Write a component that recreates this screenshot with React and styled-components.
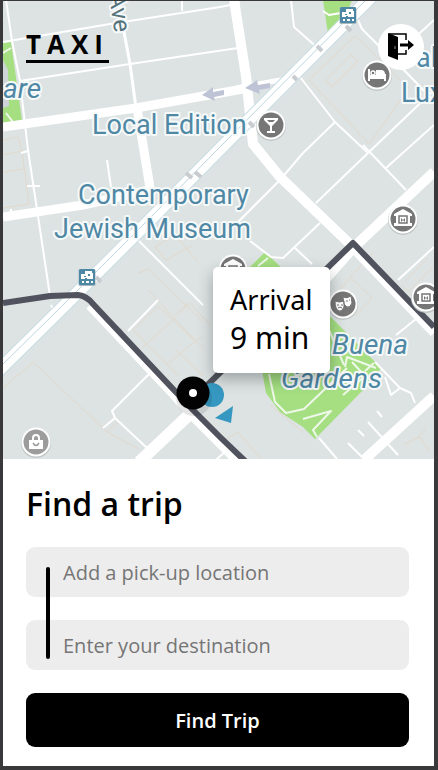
import React from "react";
import styled, { createGlobalStyle } from "styled-components";

const GlobalStyle = createGlobalStyle`
  *, *::before, *::after { box-sizing: border-box; }
  body { margin: 0; background: #39393b; }
`;

const Screen = styled.main`
  display: flex;
  flex-direction: column;
  min-height: 100vh;
  border: solid #39393b;
  border-width: 1px 4px 4px 3px;
  background: #fff;
  color: #000;
  font-family: "Open Sans", "Noto Sans", sans-serif;
`;

const MapArea = styled.section`
  position: relative;
  display: flex;
  flex: 1;
  min-height: 400px;
  overflow: hidden;
  background: #dde3e3;
`;

const MapCanvas = styled.svg`
  position: absolute;
  inset: 0;
  width: 100%;
  height: 100%;
`;

const Header = styled.header`
  position: relative;
  display: flex;
  flex: 1;
  align-items: flex-start;
  justify-content: space-between;
  padding: 23px 10px 0 23px;
`;

const Logo = styled.h1`
  margin: 5px 0 0;
  padding-bottom: 1px;
  border-bottom: 3px solid #000;
  font-family: "Open Sans", sans-serif;
  font-size: 26px;
  line-height: 30px;
  font-weight: 700;
  letter-spacing: 6px;
`;

const LogoutButton = styled.button`
  display: grid;
  place-items: center;
  width: 46px;
  height: 46px;
  padding: 0;
  border: 0;
  border-radius: 50%;
  background: #fff;
  cursor: pointer;
`;

const ArrivalCard = styled.div`
  position: absolute;
  left: 210px;
  top: 266px;
  width: 117px;
  padding: 15px 0 16px 17px;
  border-radius: 5px;
  background: #fff;
  box-shadow: 0 6px 16px rgba(0, 0, 0, 0.3);
  font-family: "Noto Sans", sans-serif;
  white-space: nowrap;
`;

const ArrivalLabel = styled.div`
  font-size: 27px;
  line-height: 36px;
`;

const ArrivalTime = styled.div`
  font-size: 30px;
  line-height: 39px;
`;

const TripForm = styled.form`
  display: flex;
  flex-direction: column;
  gap: 23px;
  padding: 25px 25px 19px 23px;
`;

const Title = styled.h2`
  margin: 0;
  font-size: 32px;
  line-height: 40px;
  font-weight: 600;
`;

const Fields = styled.div`
  position: relative;
  display: flex;
  flex-direction: column;
  gap: 23px;

  &::before {
    content: "";
    position: absolute;
    left: 20px;
    top: 20px;
    bottom: 11px;
    width: 4px;
    border-radius: 2px;
    background: #000;
  }
`;

const Field = styled.input`
  width: 100%;
  height: 50px;
  padding: 0 16px 0 37px;
  border: 0;
  border-radius: 9px;
  background: #ededed;
  color: #000;
  font: inherit;
  font-size: 20px;

  &::placeholder { color: #757575; opacity: 1; }
`;

const SubmitButton = styled.button`
  height: 54px;
  padding: 0 16px;
  border: 0;
  border-radius: 9px;
  background: #000;
  color: #fff;
  font: inherit;
  font-size: 20px;
  font-weight: 600;
  cursor: pointer;
`;

const MapLabel = styled.text`
  fill: #4f88a5;
  stroke: #f6f9f9;
  stroke-width: 4px;
  stroke-linejoin: round;
  paint-order: stroke;
  font-family: Roboto, "Liberation Sans", sans-serif;
  font-size: ${(p) => (p.$italic ? "28px" : "27px")};
  font-style: ${(p) => (p.$italic ? "italic" : "normal")};
`;

const StreetLabel = styled(MapLabel)`
  fill: #56737c;
  font-size: 24px;
`;

const Lines = ({ paths, width, color = "#fff" }) => (
  <g fill="none" stroke={color} strokeWidth={width} strokeLinejoin="round">
    {paths.map((d) => <path key={d} d={d} />)}
  </g>
);

const thinRoads = [
  "M6 0 12 41 20 81 28 150 38 216 50 296",
  "M3 42 110 24 220 7 240 3",
  "M182 0V11",
  "M20 81 130 64 238 48",
  "M21 153 28 151M27 186H40M11 215V209",
  "M107 160 111 187",
  "M291 0 294 27 320 50",
  "M323 11 329 15 341 13",
  "M358 20 362 29 381 48 401 67 434 101",
  "M434 20 410 42",
  "M300 77 335 122 368 153",
  "M335 122 303 153 280 180 238 222",
  "M434 90 368 153 316 203",
  "M363 145 406 190",
  "M434 125 386 168",
  "M320 223 283 258 271 257 250 241",
  "M295 248 312 264",
  "M434 247 398 280",
  "M138 240 203 305",
  "M158 300 128 331",
  "M152 371 112 411 115 418 147 448M115 418 103 428",
  "M51 305 55 314",
  "M385 377 391 395 400 388 411 393 415 403",
  "M375 362 400 388M396 335 421 315",
  "M319 438 337 459",
  "M368 422 398 455M348 443 363 458M377 411 382 417M358 430 364 436",
  "M216 460 228 449",
];

const buildings = [
  "M3 140 18 137 22 151 3 155M22 151 29 204 3 208M3 172 24 169",
  "M3 388 33 362 107 432 139 449M107 432 120 420",
  "M138 273 148 269 202 321M148 290 195 340M133 330 178 376M133 330 158 306M142 348 175 318M158 306 203 348M166 365 203 335M180 313 190 303 210 325M176 350 203 376M187 304 175 315",
  "M155 247 175 235 198 262M155 247 166 260 192 246",
  "M309 80 355 36 409 88 369 144 309 80M326 80 351 55 358 61 332 87Z",
  "M405 281 428 258M409 291 434 266M401 285 416 298",
  "M335 297 350 277 372 298 355 316M350 277 373 253",
  "M220 443 238 432 260 458M270 405 304 433",
  "M404 444 420 437 430 452M417 439 426 428",
];

const streetTicks = "M107 326 113 331M116 327 122 332M186 173 192 178M195 172 201 177M346 26 351 31M317 46 322 51M293 76 297 80M249 122 254 127M96 277 101 282";

function Poi({ x, y, color = "#767676", children }) {
  return (
    <g transform={`translate(${x} ${y})`}>
      <circle cy="1" r="15" fill="#bfc5c5" />
      <circle r="14.5" fill="#fff" />
      <circle r="12.5" fill={color} />
      {children}
    </g>
  );
}

const Museum = () => (
  <g>
    <path d="M-9-3V-5L0-10 9-5V-3H7V4H9V7H-9V4H-7V-3Z" fill="#fff" />
    <path d="M-4-3H4V4H-4Z" fill="none" stroke="#767676" strokeWidth="1.5" />
    <path d="M-2-1V3L0 1 2 3V-1L0 1Z" fill="#767676" />
  </g>
);

function Transit({ x, y }) {
  return (
    <g transform={`translate(${x} ${y})`}>
      <rect x="-8.5" y="-8" width="17" height="17" rx="1.5" fill="#aab9c0" />
      <rect x="-8" y="-8" width="16" height="16" rx="1.5" fill="#4d88a4" />
      <path d="M-2-6H5V-4H6V2H-6V-3H-2Z" fill="#fff" />
      <path d="M-3-1H-1V0H-3ZM1-3H3V-1H1ZM-2 1H0V2H-2Z" fill="#4d88a4" />
      <path d="M-5 4H-3V6H-5ZM-1 4H2V6H-1ZM4 4H6V6H4Z" fill="#fff" />
    </g>
  );
}

function CityMap() {
  return (
    <MapCanvas viewBox="3 1 431 458" preserveAspectRatio="xMidYMid slice" role="img" aria-label="Map of the trip">
      <rect width="438" height="462" fill="#dde3e3" />
      <g fill="#a5df82">
        <path d="M3 43 11 42 22 120 3 123Z" />
        <path d="M323 0H352L349 8 328 34Z" />
        <path d="M265 252 284 270H247Z" />
        <path d="M326 312 381 368 368 385 315 439 303 427 280 412 266 393 262 370Z" />
      </g>
      <path d="M3 60 8 70 9 106 3 108Z" fill="#cfd4d7" />
      <Lines paths={buildings} width={1} color="#e2d9cc" />
      <Lines paths={thinRoads} width={2} />
      <Lines paths={["M3 53 11 48M6 113 13 122M258 266 268 258", "M269 374 275 402 286 413 304 409 347 368M303 419 331 411 313 430 317 437M345 367 347 357 376 368M352 362 365 376 343 395M365 371 374 363M329 330 344 365"]} width={2} color="#eef8e9" />
      <Lines paths={["M118 0 130 64 136 108"]} width={3} />
      <Lines paths={["M3 127 136 108 243 89", "M3 217 83 205 149 190", "M137 108 151 194"]} width={9} />
      <Lines paths={["M236 88 286 79"]} width={5} />
      <Lines paths={["M234 0 246 76 253 144 280 177 352 246", "M434 172 353 248 323 282", "M434 396 364 460"]} width={10} />
      <Lines paths={["M192 412 139 462"]} width={12} />
      <Lines paths={["M372 -4 218 151 140 230 65 305 -2 371"]} width={14} color="#c9dde3" />
      <Lines paths={["M372 -4 218 151 140 230 65 305 -2 371"]} width={12} />
      <Lines paths={["M370 -4 216 151 138 230 63 305 -4 371"]} width={1} color="#bcd5df" />
      <Lines paths={[streetTicks]} width={4} color="#c8cccf" />
      <g fill="#bec4d5">
        <path d="M202 95 213 87V92L224 90V95L214 97 215 101Z" />
        <path d="M245 88 257 80 258 85 270 83V88L259 90 260 94Z" />
      </g>

      <Lines paths={["M90 305 171 391 195 418 240 463"]} width={10} />
      <Lines paths={["M353 248 434 333"]} width={9} />
      <Lines paths={["M3 303 50 296 78 295Q87 296 93 304L173 389 193 410 220 437 245 461", "M193 399 353 243 434 327"]} width={6} color="#50535e" />

      <Poi x={377} y={75}>
        <path d="M-8-6V6M-8 3H8M8 6V-1" fill="none" stroke="#fff" strokeWidth="2" />
        <path d="M-7 0V2H8V-1Q8-5 4-5H-1V0Z" fill="#fff" />
        <circle cx="-4" cy="-2" r="2" fill="none" stroke="#fff" strokeWidth="1.5" />
      </Poi>
      <Poi x={271} y={125}>
        <path d="M-7-7H7V-5L1 1V6H4V8H-4V6H-1V1L-7-5ZM-4-5-2-3H2L4-5Z" fill="#fff" fillRule="evenodd" />
      </Poi>
      <Poi x={403} y={219}><Museum /></Poi>
      <Poi x={426} y={297}><Museum /></Poi>
      <Poi x={233} y={269}><Museum /></Poi>
      <Poi x={343} y={304}>
        <path d="M0-7Q4-5 8-8L9-1Q7 4 4 3L1 0ZM-8-3Q-4-1 1-3L1 3Q-1 8-4 7-8 5-8-3Z" fill="#fff" stroke="#767676" />
        <path d="M3-3H5M6-4H7M-6 1H-4M-2 1H0M-5 4Q-3 2-1 4" fill="none" stroke="#767676" />
      </Poi>
      <Poi x={36} y={442} color="#9c9c9c">
        <path d="M-7-2H7V7H-7Z" fill="#fff" />
        <path d="M-3-1V-4Q-3-7 0-7T3-4V-1" fill="none" stroke="#fff" strokeWidth="2" />
        <path d="M-3 1Q0 6 3 1" fill="none" stroke="#9c9c9c" strokeWidth="1.5" />
      </Poi>
      <Transit x={348} y={15} />
      <Transit x={87} y={277} />

      <MapLabel x="92" y="134">Local Edition</MapLabel>
      <MapLabel x="78" y="204">Contemporary</MapLabel>
      <MapLabel x="54" y="238">Jewish Museum</MapLabel>
      <MapLabel x="3" y="98" $italic>are</MapLabel>
      <MapLabel x="332" y="354" $italic>Buena</MapLabel>
      <MapLabel x="281" y="388" $italic>Gardens</MapLabel>
      <MapLabel x="416" y="67">al</MapLabel>
      <MapLabel x="401" y="102">Lux</MapLabel>
      <g transform="translate(109 -6) rotate(82)">
        <StreetLabel>Ave</StreetLabel>
      </g>

      <circle cx="212" cy="395" r="12" fill="#3698c1" />
      <path d="M215 418 233 406 231 423Z" fill="#3698c1" />
      <circle cx="194" cy="398" r="18" fill="#000" opacity="0.1" />
      <circle cx="193" cy="393" r="16.5" fill="#030303" />
      <circle cx="193" cy="393" r="4" fill="#fff" />
    </MapCanvas>
  );
}

const LogoutIcon = () => (
  <svg width="28" height="30" viewBox="0 0 28 30" aria-hidden="true">
    <path d="M1 1 11 5V28L1 24Z" fill="#000" />
    <path d="M2 2H19V8M11 22H19V18" fill="none" stroke="#000" strokeWidth="1.5" />
    <path d="M13 11.5H21V8L27 13 21 18V14.5H13Z" fill="#000" />
    <path d="M8 14V17" stroke="#888" />
  </svg>
);

export default function App() {
  return (
    <>
      <GlobalStyle />
      <Screen>
        <MapArea>
          <CityMap />
          <ArrivalCard>
            <ArrivalLabel>Arrival</ArrivalLabel>
            <ArrivalTime>9 min</ArrivalTime>
          </ArrivalCard>
          <Header>
            <Logo>TAXI</Logo>
            <LogoutButton type="button" aria-label="Log out"><LogoutIcon /></LogoutButton>
          </Header>
        </MapArea>
        <TripForm onSubmit={(event) => event.preventDefault()}>
          <Title>Find a trip</Title>
          <Fields>
            <Field aria-label="Pick-up location" placeholder="Add a pick-up location" />
            <Field aria-label="Destination" placeholder="Enter your destination" />
          </Fields>
          <SubmitButton type="submit">Find Trip</SubmitButton>
        </TripForm>
      </Screen>
    </>
  );
}
